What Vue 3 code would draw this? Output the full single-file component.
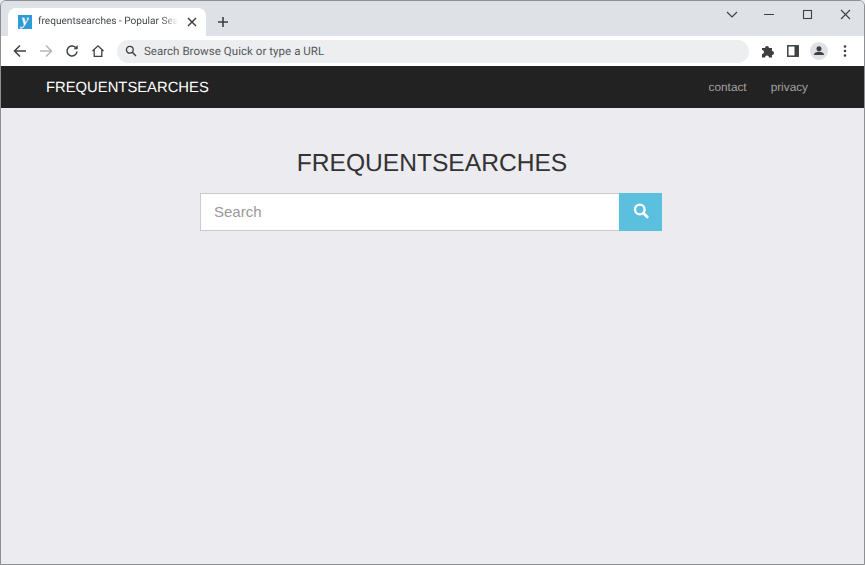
<script setup>
const title = 'FREQUENTSEARCHES'
</script>

<template>
  <div class="window">
    <header class="tabstrip">
      <div class="tab">
        <span class="favicon">y</span>
        <span class="tab-title">frequentsearches - Popular Searches</span>
        <svg class="tab-close" width="10" height="10" viewBox="0 0 10 10"><path d="M1 1l8 8M9 1l-8 8" stroke="#3c4043" stroke-width="1.5" fill="none"/></svg>
      </div>
      <svg class="new-tab" width="12" height="12" viewBox="0 0 12 12"><path d="M6 1v10M1 6h10" stroke="#3c4043" stroke-width="1.6" fill="none"/></svg>
      <div class="win-controls">
        <svg width="46" height="28" viewBox="0 0 46 28"><path d="M22 11l5 5 5-5" stroke="#3c4043" stroke-width="1.1" fill="none"/></svg>
        <svg width="37" height="28" viewBox="0 0 37 28"><path d="M13 13.500h10" stroke="#3c4043" stroke-width="1.1" fill="none"/></svg>
        <svg width="38" height="28" viewBox="0 0 38 28"><rect x="15.500" y="9.500" width="8" height="8" stroke="#3c4043" stroke-width="1.1" fill="none"/></svg>
        <svg width="38" height="28" viewBox="0 0 38 28"><path d="M15 9l9 9M24 9l-9 9" stroke="#3c4043" stroke-width="1.1" fill="none"/></svg>
      </div>
    </header>

    <div class="toolbar">
      <svg class="tool" width="14" height="14" viewBox="0 0 14 14"><path d="M13 7H2M7 1.500 1.500 7 7 12.500" stroke="#3c4043" stroke-width="1.500" fill="none"/></svg>
      <svg class="tool" width="14" height="14" viewBox="0 0 14 14"><path d="M1 7h11M7 1.500 12.500 7 7 12.500" stroke="#b4b6b9" stroke-width="1.500" fill="none"/></svg>
      <svg class="tool" width="14" height="14" viewBox="0 0 14 14"><path d="M12 7.500a5 5 0 1 1-1.400-4" stroke="#3c4043" stroke-width="1.500" fill="none"/><path d="M12.700 1v4.200H8.500z" fill="#3c4043"/></svg>
      <svg class="tool" width="14" height="14" viewBox="0 0 14 14"><path d="M1.500 7 7 1.800 12.500 7M3.200 6v6.300h7.600V6" stroke="#3c4043" stroke-width="1.300" fill="none"/></svg>
      <div class="omnibox">
        <svg width="12" height="12" viewBox="0 0 12 12"><circle cx="4.800" cy="4.800" r="3.400" stroke="#3c4043" stroke-width="1.300" fill="none"/><path d="M7.300 7.300 11 11" stroke="#3c4043" stroke-width="1.500"/></svg>
        <span>Search Browse Quick or type a URL</span>
      </div>
      <div class="tool-actions">
        <svg width="14" height="14" viewBox="0 0 14 14"><path d="M1 4h3a2 2 0 0 1 4 0h3v3a2 2 0 0 1 0 4v2.500H8a2 2 0 0 0-4 0H1V10a2 2 0 0 0 0-4z" fill="#3c4043"/></svg>
        <svg width="12" height="12" viewBox="0 0 12 12"><rect x="0.800" y="0.800" width="10.400" height="10.400" fill="none" stroke="#3c4043" stroke-width="1.500"/><rect x="7.500" y="1" width="3.500" height="10" fill="#3c4043"/></svg>
        <svg class="avatar" width="18" height="18" viewBox="0 0 18 18"><circle cx="9" cy="9" r="9" fill="#dfe1e7"/><circle cx="9" cy="6.800" r="2.500" fill="#3c4043"/><path d="M4 13c0-2.500 2.500-3.300 5-3.300s5 .8 5 3.300z" fill="#3c4043"/></svg>
        <svg class="dots" width="4" height="14" viewBox="0 0 4 14"><circle cx="2" cy="2.500" r="1.300" fill="#3c4043"/><circle cx="2" cy="7" r="1.300" fill="#3c4043"/><circle cx="2" cy="11.500" r="1.300" fill="#3c4043"/></svg>
      </div>
    </div>

    <nav class="navbar">
      <a class="brand">{{ title }}</a>
      <div class="links">
        <a>contact</a>
        <a>privacy</a>
      </div>
    </nav>

    <main class="page">
      <h1>{{ title }}</h1>
      <form class="search" @submit.prevent>
        <input type="text" placeholder="Search" />
        <button type="submit" aria-label="Search">
          <svg width="16" height="16" viewBox="0 0 16 16"><circle cx="6.800" cy="6.500" r="4.800" stroke="#fff" stroke-width="2.300" fill="none"/><path d="M10.300 10l4 4" stroke="#fff" stroke-width="2.600" stroke-linecap="round"/></svg>
        </button>
      </form>
    </main>
  </div>
</template>

<style>
html, body { margin: 0; background: #ebebf0; }
</style>

<style scoped>
.window {
  width: 865px;
  height: 565px;
  box-sizing: border-box;
  border: 1px solid #8d8f92;
  border-radius: 6px 6px 0 0;
  display: flex;
  flex-direction: column;
  overflow: hidden;
  font-family: "Liberation Sans", Arial, sans-serif;
  background: #ebebf0;
  text-rendering: geometricPrecision;
}
.tabstrip {
  height: 35px;
  flex: none;
  background: #dee1e6;
  display: flex;
  align-items: flex-end;
  padding-left: 7px;
}
.tab {
  width: 198px;
  height: 28px;
  box-sizing: border-box;
  background: #fff;
  border-radius: 8px 8px 0 0;
  display: flex;
  align-items: center;
  padding: 0 9px 0 10px;
}
.favicon {
  width: 14px;
  height: 14px;
  flex: none;
  background: #2e9bd6;
  color: #fff;
  font: italic bold 16px/12px "Liberation Serif", serif;
  text-align: center;
}
.tab-title {
  flex: 1;
  min-width: 0;
  margin-left: 6px;
  margin-right: 9px;
  font: 10.100px/14px Roboto, sans-serif;
  color: #45484c;
  white-space: nowrap;
  overflow: hidden;
  -webkit-mask-image: linear-gradient(to right, #000 88%, transparent);
  mask-image: linear-gradient(to right, #000 88%, transparent);
}
.tab-close { flex: none; }
.new-tab { margin: 0 0 8px 11px; }
.win-controls {
  margin-left: auto;
  align-self: flex-start;
  display: flex;
}
.toolbar {
  height: 30px;
  flex: none;
  background: #fff;
  display: flex;
  align-items: center;
  padding-left: 11.500px;
  gap: 12.100px;
}
.tool { flex: none; }
.omnibox {
  width: 632px;
  height: 23px;
  background: #eceef0;
  border-radius: 12px;
  display: flex;
  align-items: center;
  gap: 7px;
  padding-left: 8px;
  box-sizing: border-box;
  font: 11.500px/14px Roboto, sans-serif;
  letter-spacing: 0.050px;
  color: #55585c;
}
.tool-actions {
  display: flex;
  align-items: center;
  gap: 12px;
}
.avatar { margin-left: -1px; }
.dots { margin-left: 3px; }
.navbar {
  height: 42px;
  box-sizing: border-box;
  flex: none;
  background: #222;
  display: flex;
  align-items: center;
  justify-content: space-between;
  padding: 1px 56px 0 45px;
}
.brand {
  color: #fff;
  font-size: 14.800px;
}
.links {
  display: flex;
  gap: 24px;
  margin-top: -2px;
  color: #a3a3a3;
  font-size: 11.800px;
}
.page {
  flex: 1;
  background: #ebebf0;
  display: flex;
  flex-direction: column;
  align-items: center;
  padding-top: 40px;
  padding-right: 3px;
}
h1 {
  margin: 0 0 14px;
  font-size: 24.600px;
  line-height: 31px;
  font-weight: 400;
  color: #333;
  position: relative;
  left: 1px;
}
.search {
  display: flex;
  width: 462px;
  height: 38px;
}
input {
  flex: 1;
  min-width: 0;
  box-sizing: border-box;
  height: 38px;
  padding: 0 13px 1px;
  border: 1px solid #ccc;
  border-right: 0;
  background: #fff;
  font: 15px "Liberation Sans", Arial, sans-serif;
  outline: 0;
}
input::placeholder { color: #999; opacity: 1; }
button {
  width: 43px;
  flex: none;
  border: 0;
  padding: 0 0 3px;
  background: #5bc0de;
  display: flex;
  align-items: center;
  justify-content: center;
}
</style>
